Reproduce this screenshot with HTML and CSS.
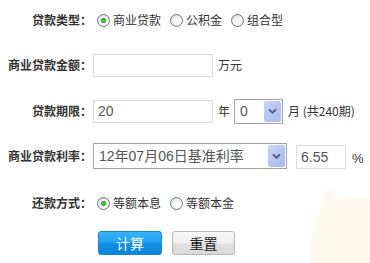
FILE: index.html
```html
<!DOCTYPE html>
<html lang="zh-CN">
<head>
<meta charset="utf-8">
<title>房贷计算器</title>
<link rel="stylesheet" href="styles.css">
</head>
<body>
<div class="page">
  <form class="calc">
    <div class="row r1">
      <label class="lbl">贷款类型：</label>
      <div class="ctl">
        <label class="opt"><input type="radio" name="type" checked><span>商业贷款</span></label>
        <label class="opt"><input type="radio" name="type"><span>公积金</span></label>
        <label class="opt"><input type="radio" name="type"><span>组合型</span></label>
      </div>
    </div>
    <div class="row r2">
      <label class="lbl">商业贷款金额：</label>
      <div class="ctl">
        <input class="txt wide" type="text" value="">
        <span class="unit">万元</span>
      </div>
    </div>
    <div class="row r3">
      <label class="lbl">贷款期限：</label>
      <div class="ctl">
        <input class="txt wide" type="text" value="20">
        <span class="unit">年</span>
        <div class="sel small"><select><option>0</option></select><span class="arrow"><svg viewBox="0 0 10 8" width="9" height="7"><path d="M1 1.5 L5 5.5 L9 1.5" fill="none" stroke="#4d5566" stroke-width="2"/></svg></span></div>
        <span class="unit">月 <span class="note">(共240期)</span></span>
      </div>
    </div>
    <div class="row r4">
      <label class="lbl">商业贷款利率：</label>
      <div class="ctl">
        <div class="sel big"><select><option>12年07月06日基准利率</option></select><span class="arrow"><svg viewBox="0 0 10 8" width="9" height="7"><path d="M1 1.5 L5 5.5 L9 1.5" fill="none" stroke="#4d5566" stroke-width="2"/></svg></span></div>
        <input class="txt rate" type="text" value="6.55">
        <span class="unit pct">%</span>
      </div>
    </div>
    <div class="row r5">
      <label class="lbl">还款方式：</label>
      <div class="ctl">
        <label class="opt"><input type="radio" name="pay" checked><span>等额本息</span></label>
        <label class="opt"><input type="radio" name="pay"><span>等额本金</span></label>
      </div>
    </div>
    <div class="row r6">
      <span class="lbl"></span>
      <div class="ctl btns">
        <button type="button" class="btn primary">计算</button>
        <button type="reset" class="btn plain">重置</button>
      </div>
    </div>
  </form>
  <svg class="mark" viewBox="0 0 60 75" width="60" height="75">
    <path d="M17 2 C21 0 25 3 24 9 L26 11 C32 9 40 8 44 9 C48 8 52 10 57 12 L60 13 L60 75 L1 75 L0 55 C2 48 4 40 6 32 C8 24 12 18 14 12 C14 7 15 4 17 2 Z" fill="#fff9ee"/>
  </svg>
</div>
</body>
</html>
```

FILE: styles.css
```css
html, body {
  margin: 0;
  padding: 0;
  background: #ffffff;
}

.page {
  position: relative;
  width: 370px;
  height: 263px;
  overflow: hidden;
  font-family: "Noto Sans CJK SC", "Liberation Sans", sans-serif;
  font-size: 12px;
  color: #333;
}

.calc {
  position: relative;
  z-index: 1;
  display: flex;
  flex-direction: column;
  padding: 7px 0 0 8px;
}

.row {
  display: flex;
  align-items: center;
  height: 26px;
}

.r2 { margin-top: 19px; }
.r3 { margin-top: 20px; }
.r4 { margin-top: 19px; }
.r5 { margin-top: 21px; }
.r6 { margin-top: 15px; height: 24px; }

.lbl {
  width: 84px;
  flex: none;
  text-align: right;
  font-weight: bold;
  color: #333;
  line-height: 16px;
  white-space: nowrap;
}

.ctl {
  display: flex;
  align-items: center;
  margin-left: 1px;
  height: 100%;
}

.opt {
  display: flex;
  align-items: center;
  margin-left: 4px;
  margin-right: 5px;
  line-height: 16px;
  color: #333;
}

.opt input {
  appearance: none;
  -webkit-appearance: none;
  width: 13px;
  height: 13px;
  margin: 0 3px 0 0;
  border: 1px solid #6b7580;
  border-radius: 50%;
  background: radial-gradient(circle at 65% 70%, #ffffff 0%, #f2f2f2 45%, #d8d8d8 100%);
  box-sizing: border-box;
  flex: none;
}

.opt input:checked {
  background:
    radial-gradient(circle at 50% 50%, #4fd33b 0, #2fae1f 2.2px, transparent 2.8px),
    radial-gradient(circle at 65% 70%, #ffffff 0%, #f2f2f2 45%, #d8d8d8 100%);
}

.txt {
  box-sizing: border-box;
  height: 23px;
  border: 1px solid #dcdcdc;
  padding: 0 4px;
  font-family: "Liberation Sans", "Noto Sans CJK SC", sans-serif;
  font-size: 14px;
  color: #555;
  background: #fff;
  outline: none;
}

.wide { width: 120px; }

.rate {
  width: 50px;
  height: 24px;
  margin-left: 9px;
  margin-top: 2px;
}

.unit {
  margin-left: 5px;
  line-height: 16px;
  color: #333;
  white-space: nowrap;
}

.r3 .sel + .unit { margin-left: 5px; }

.note { color: #333; }

.pct {
  margin-left: 6px;
  margin-top: 6px;
  font-family: "Liberation Sans", sans-serif;
  font-size: 13px;
}

.sel {
  box-sizing: border-box;
  display: flex;
  align-items: stretch;
  border: 1px solid #a3a3a3;
  background: #fff;
  padding: 1px;
}

.sel select {
  appearance: none;
  -webkit-appearance: none;
  flex: 1;
  min-width: 0;
  border: 0;
  margin: 0;
  padding: 0 0 0 4px;
  background: transparent;
  font-family: "Liberation Sans", "Noto Sans CJK SC", sans-serif;
  font-size: 14px;
  color: #555;
  outline: none;
}

.sel .arrow {
  width: 17px;
  flex: none;
  display: flex;
  align-items: center;
  justify-content: center;
  background: linear-gradient(135deg, #c9d6fb 0%, #b5c6f7 50%, #a9bbf3 100%);
  border-radius: 2px;
}

.small {
  width: 49px;
  height: 25px;
  margin-left: 4px;
}

.big {
  width: 194px;
  height: 26px;
}

.btns { margin-left: 6px; }

.btn {
  box-sizing: border-box;
  width: 64px;
  height: 24px;
  border-radius: 3px;
  font-family: "Noto Sans CJK SC", sans-serif;
  font-size: 14px;
  line-height: 20px;
  padding: 0;
  cursor: pointer;
}

.primary {
  color: #fff;
  border: 1px solid #1785d6;
  background: linear-gradient(#3ab2fb 0%, #22a2f3 45%, #0f8fe3 55%, #0c86d8 100%);
}

.plain {
  margin-left: 10px;
  width: 63px;
  color: #222;
  border: 1px solid #b8b8b8;
  background: linear-gradient(#f8f8f8 0%, #eeeeee 50%, #e0e0e0 55%, #d9d9d9 100%);
}

.mark {
  position: absolute;
  right: 0;
  bottom: 0;
  z-index: 0;
}
```
